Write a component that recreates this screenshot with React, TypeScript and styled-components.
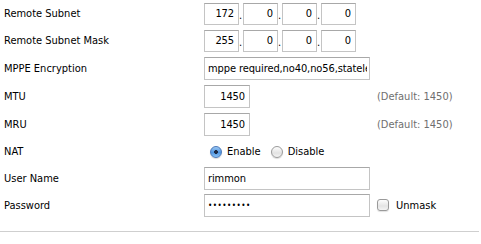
import React from "react";
import styled, { createGlobalStyle } from "styled-components";

const Global = createGlobalStyle`
  html, body { margin: 0; padding: 0; background: #fff; }
  body { font-family: "DejaVu Sans Condensed", "DejaVu Sans", sans-serif; font-size: 11px; color: #000; }
`;

const Form = styled.div`
  display: flex;
  flex-direction: column;
  width: 481px;
`;

const Row = styled.div<{ $h: number }>`
  display: grid;
  grid-template-columns: 200px 173px 1fr;
  padding-left: 4px;
  height: ${(p) => p.$h}px;
  align-items: center;
`;

const Label = styled.div`
  font-size: 11px;
  color: #000;
  white-space: nowrap;
`;

const Field = styled.div`
  display: flex;
  align-items: center;
`;

const Input = styled.input<{ $w: number; $h?: number; $right?: boolean; $fs?: number }>`
  box-sizing: border-box;
  width: ${(p) => p.$w}px;
  height: ${(p) => p.$h ?? 23}px;
  margin: 0;
  padding: 0 ${(p) => (p.$right ? 4 : 2)}px 0 3px;
  border: 1px solid #c4c4c4;
  border-top-color: #a8a8a8;
  background: #fff;
  font-family: "DejaVu Sans Condensed", "DejaVu Sans", sans-serif;
  font-size: ${(p) => p.$fs ?? 11}px;
  letter-spacing: ${(p) => (p.$fs ? "0.5px" : "-0.1px")};
  color: #000;
  text-align: ${(p) => (p.$right ? "right" : "left")};
  outline: none;
`;

const Dot = styled.span`
  width: 4px;
  font-size: 11px;
  color: #000;
  text-align: left;
  align-self: flex-end;
  padding-bottom: 3px;
`;

const Hint = styled.span`
  color: #6f6f6f;
  font-size: 11px;
  white-space: nowrap;
`;

const Choice = styled.label<{ $indent?: number }>`
  display: inline-flex;
  align-items: center;
  gap: 5px;
  margin-left: ${(p) => p.$indent ?? 0}px;
  margin-right: 10px;
  font-size: 11px;
  color: #000;
`;

const Radio = styled.span<{ $on?: boolean }>`
  box-sizing: border-box;
  width: 12px;
  height: 12px;
  border-radius: 50%;
  border: 1px solid ${(p) => (p.$on ? "#4a78b8" : "#9a9a9a")};
  background: ${(p) =>
    p.$on
      ? "radial-gradient(circle at 50% 50%, #1d2a45 0 1.6px, transparent 2.2px), linear-gradient(#9cc8f4, #4f95e0 55%, #8dc4f6)"
      : "linear-gradient(#fdfdfd, #e2e2e2 60%, #f4f4f4)"};
  box-shadow: 0 1px 1px rgba(0, 0, 0, 0.15);
`;

const Check = styled.span`
  box-sizing: border-box;
  width: 12px;
  height: 12px;
  border-radius: 3px;
  border: 1px solid #9a9a9a;
  background: linear-gradient(#fdfdfd, #e4e4e4 60%, #f4f4f4);
  box-shadow: 0 1px 1px rgba(0, 0, 0, 0.12);
`;

const CheckLabel = styled.label`
  display: inline-flex;
  align-items: center;
  gap: 7px;
  font-size: 11px;
  color: #000;
`;

const Rule = styled.hr`
  margin: 12px 2px 0 0;
  border: 0;
  border-top: 1px solid #cfcfcf;
  height: 0;
`;

const IpField = ({ parts }: { parts: string[] }) => (
  <Field>
    {parts.map((p, i) => (
      <React.Fragment key={i}>
        <Input $w={35} $h={22} $right readOnly value={p} />
        {i < 3 && <Dot>.</Dot>}
      </React.Fragment>
    ))}
  </Field>
);

export default function App() {
  return (
    <>
      <Global />
      <Form>
        <Row $h={27}>
          <Label>Remote Subnet</Label>
          <IpField parts={["172", "0", "0", "0"]} />
        </Row>
        <Row $h={27}>
          <Label>Remote Subnet Mask</Label>
          <IpField parts={["255", "0", "0", "0"]} />
        </Row>
        <Row $h={28}>
          <Label>MPPE Encryption</Label>
          <Field>
            <Input $w={166} readOnly value="mppe required,no40,no56,stateless" />
          </Field>
        </Row>
        <Row $h={28}>
          <Label>MTU</Label>
          <Field>
            <Input $w={46} $right readOnly value="1450" />
          </Field>
          <Hint>(Default: 1450)</Hint>
        </Row>
        <Row $h={28}>
          <Label>MRU</Label>
          <Field>
            <Input $w={46} $right readOnly value="1450" />
          </Field>
          <Hint>(Default: 1450)</Hint>
        </Row>
        <Row $h={27}>
          <Label>NAT</Label>
          <Field>
            <Choice $indent={6}>
              <Radio $on />
              Enable
            </Choice>
            <Choice>
              <Radio />
              Disable
            </Choice>
          </Field>
        </Row>
        <Row $h={26}>
          <Label>User Name</Label>
          <Field>
            <Input $w={166} readOnly value="rimmon" />
          </Field>
        </Row>
        <Row $h={28}>
          <Label>Password</Label>
          <Field>
            <Input $w={166} $fs={8} type="password" readOnly value="rimmon123" />
          </Field>
          <CheckLabel>
            <Check />
            Unmask
          </CheckLabel>
        </Row>
        <Rule />
      </Form>
    </>
  );
}
